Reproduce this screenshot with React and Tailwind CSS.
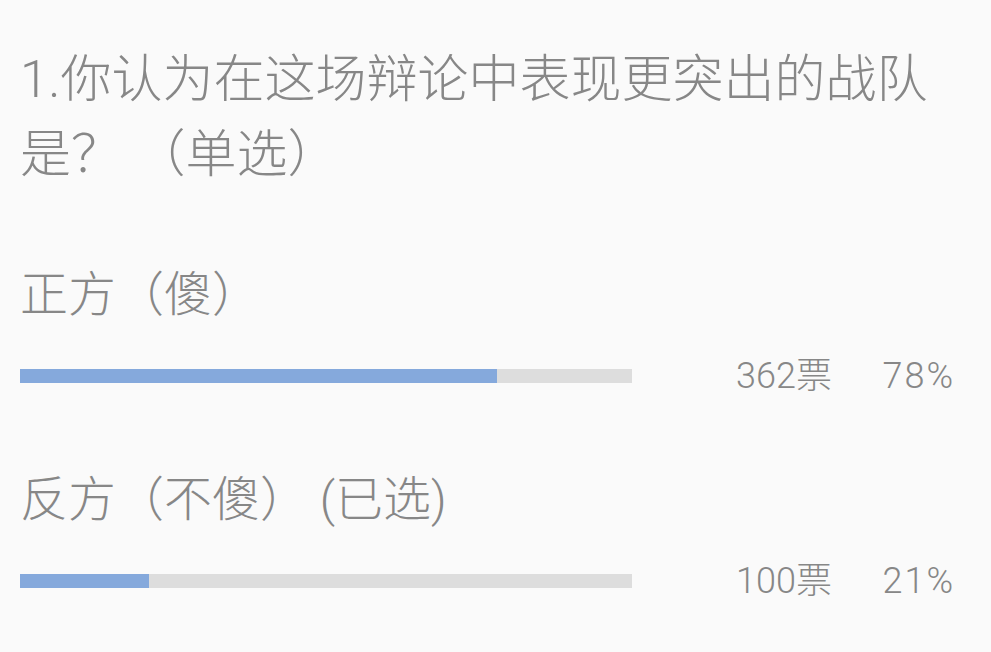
import React from "react";

const options = [
  { label: "正方（傻）", votes: 362, percent: 78, fill: 78 },
  { label: "反方（不傻） (已选)", votes: 100, percent: 21, fill: 21 },
];

const App = () => {
  return (
    <div
      className="min-h-screen bg-[#fafafa] text-[#878787] px-5 pt-[42px] font-light"
      style={{ fontFamily: 'Roboto, "Noto Sans CJK SC", sans-serif' }}
    >
      {/* 题目 */}
      <h1 className="text-[51px] leading-[75px] font-light">
        1.你认为在这场辩论中表现更突出的战队是？ （单选）
      </h1>

      {/* 选项列表 */}
      <div className="mt-[72px]">
        {options.map((opt, i) => (
          <div key={i} className={i > 0 ? "mt-[73px]" : ""}>
            <p className="text-[48px] leading-[62px]">{opt.label}</p>
            <div className="mt-[30px] flex items-center h-10">
              <div className="w-[612px] h-[14px] bg-[#dddddd]">
                <div
                  className="h-full bg-[#85a9dc]"
                  style={{ width: `${opt.fill}%` }}
                ></div>
              </div>
              <span className="w-[200px] text-right text-[36px] leading-10">
                {opt.votes}票
              </span>
              <span className="w-[123px] text-right text-[36px] leading-10 tracking-[2px]">
                {opt.percent}%
              </span>
            </div>
          </div>
        ))}
      </div>
    </div>
  );
};

export default App;
